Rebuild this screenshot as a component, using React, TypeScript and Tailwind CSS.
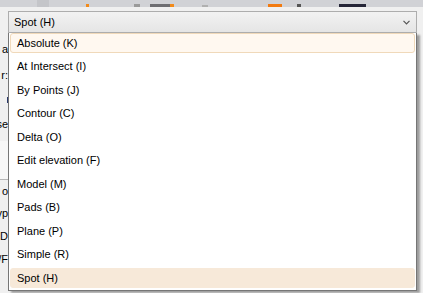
const items = [
  'Absolute (K)',
  'At Intersect (I)',
  'By Points (J)',
  'Contour (C)',
  'Delta (O)',
  'Edit elevation (F)',
  'Model (M)',
  'Pads (B)',
  'Plane (P)',
  'Simple (R)',
  'Spot (H)',
]

function Frag({ text, h }: { text: string; h: string }) {
  return (
    <div className={`flex ${h} w-[8px] items-center justify-end whitespace-nowrap`}>
      <span>{text}</span>
    </div>
  )
}

export default function App() {
  return (
    <div className="relative h-[293px] w-[423px] overflow-hidden bg-[#f0f0f0] font-['Liberation_Sans',Arial,sans-serif] text-[11px] text-[#000]">
      {/* toolbar strip behind */}
      <div className="flex h-[7px] items-end bg-[#d1d2d6]">
        <div className="ml-[37px] h-[7px] w-[12px] bg-[#c4c5c9]" />
        <div className="ml-[37px] h-[3px] w-[3px] bg-[#f28a1a]" />
        <div className="ml-[45px] h-[3px] w-[6px] bg-[#9a9a9a]" />
        <div className="ml-[10px] h-[3px] w-[20px] bg-[#6e6e72]" />
        <div className="h-[3px] w-[4px] bg-[#f28a1a]" />
        <div className="ml-[28px] h-[2px] w-[6px] bg-[#b0b0b0]" />
        <div className="ml-[60px] h-[3px] w-[14px] bg-[#f27a10]" />
        <div className="ml-[15px] h-[3px] w-[4px] bg-[#555]" />
        <div className="ml-[38px] h-[3px] w-[27px] bg-[#262638]" />
      </div>

      {/* combo box */}
      <div className="ml-[8px] mt-[4px] flex h-[22px] w-[409px] items-center justify-between border border-[#adadad] bg-gradient-to-b from-[#f2f2f2] to-[#e5e5e5] pl-[5px] pr-[6px]">
        <span>Spot (H)</span>
        <svg width="7" height="5" viewBox="0 0 7 5" className="mt-[1px]">
          <path d="M0.5 0.8 L3.5 3.8 L6.5 0.8" fill="none" stroke="#555" strokeWidth="1.2" />
        </svg>
      </div>

      {/* dialog labels underneath */}
      <div className="mt-[4px] flex flex-col">
        <Frag text="a" h="h-[25px]" />
        <Frag text="r:" h="h-[26px]" />
        <div className="flex h-[24px] w-[8px] items-center justify-end">
          <div className="h-[6px] w-[1px] bg-[#2b3a6b]" />
        </div>
        <Frag text="se" h="h-[24px]" />
        <div className="mt-[5px] h-[38px] w-[8px] bg-[#f7f7f7]" />
        <div className="h-[1px] w-[8px] bg-[#b5b5b5]" />
        <Frag text="o" h="h-[22px]" />
        <Frag text="vp" h="h-[23px]" />
        <Frag text="D" h="h-[23px]" />
        <Frag text="/F" h="h-[23px]" />
      </div>

      {/* dropdown list */}
      <div className="absolute left-[8px] top-[33px] flex h-[258px] w-[409px] flex-col gap-[3.5px] border-x border-b border-[#767676] bg-white px-[1px] shadow-[3px_2px_2px_rgba(0,0,0,0.35)]">
        {items.map((label, i) => (
          <div
            key={label}
            className={
              i === 0
                ? 'flex h-[20px] items-center rounded-[3px] border border-[#f0d9ba] bg-[#fff8f0] pl-[6px]'
                : i === items.length - 1
                  ? 'flex h-[20px] items-center rounded-[3px] border border-[#f7e9d9] bg-[#f7e9d9] pl-[6px]'
                  : 'flex h-[20px] items-center rounded-[3px] border border-transparent pl-[6px]'
            }
          >
            {label}
          </div>
        ))}
      </div>
    </div>
  )
}
